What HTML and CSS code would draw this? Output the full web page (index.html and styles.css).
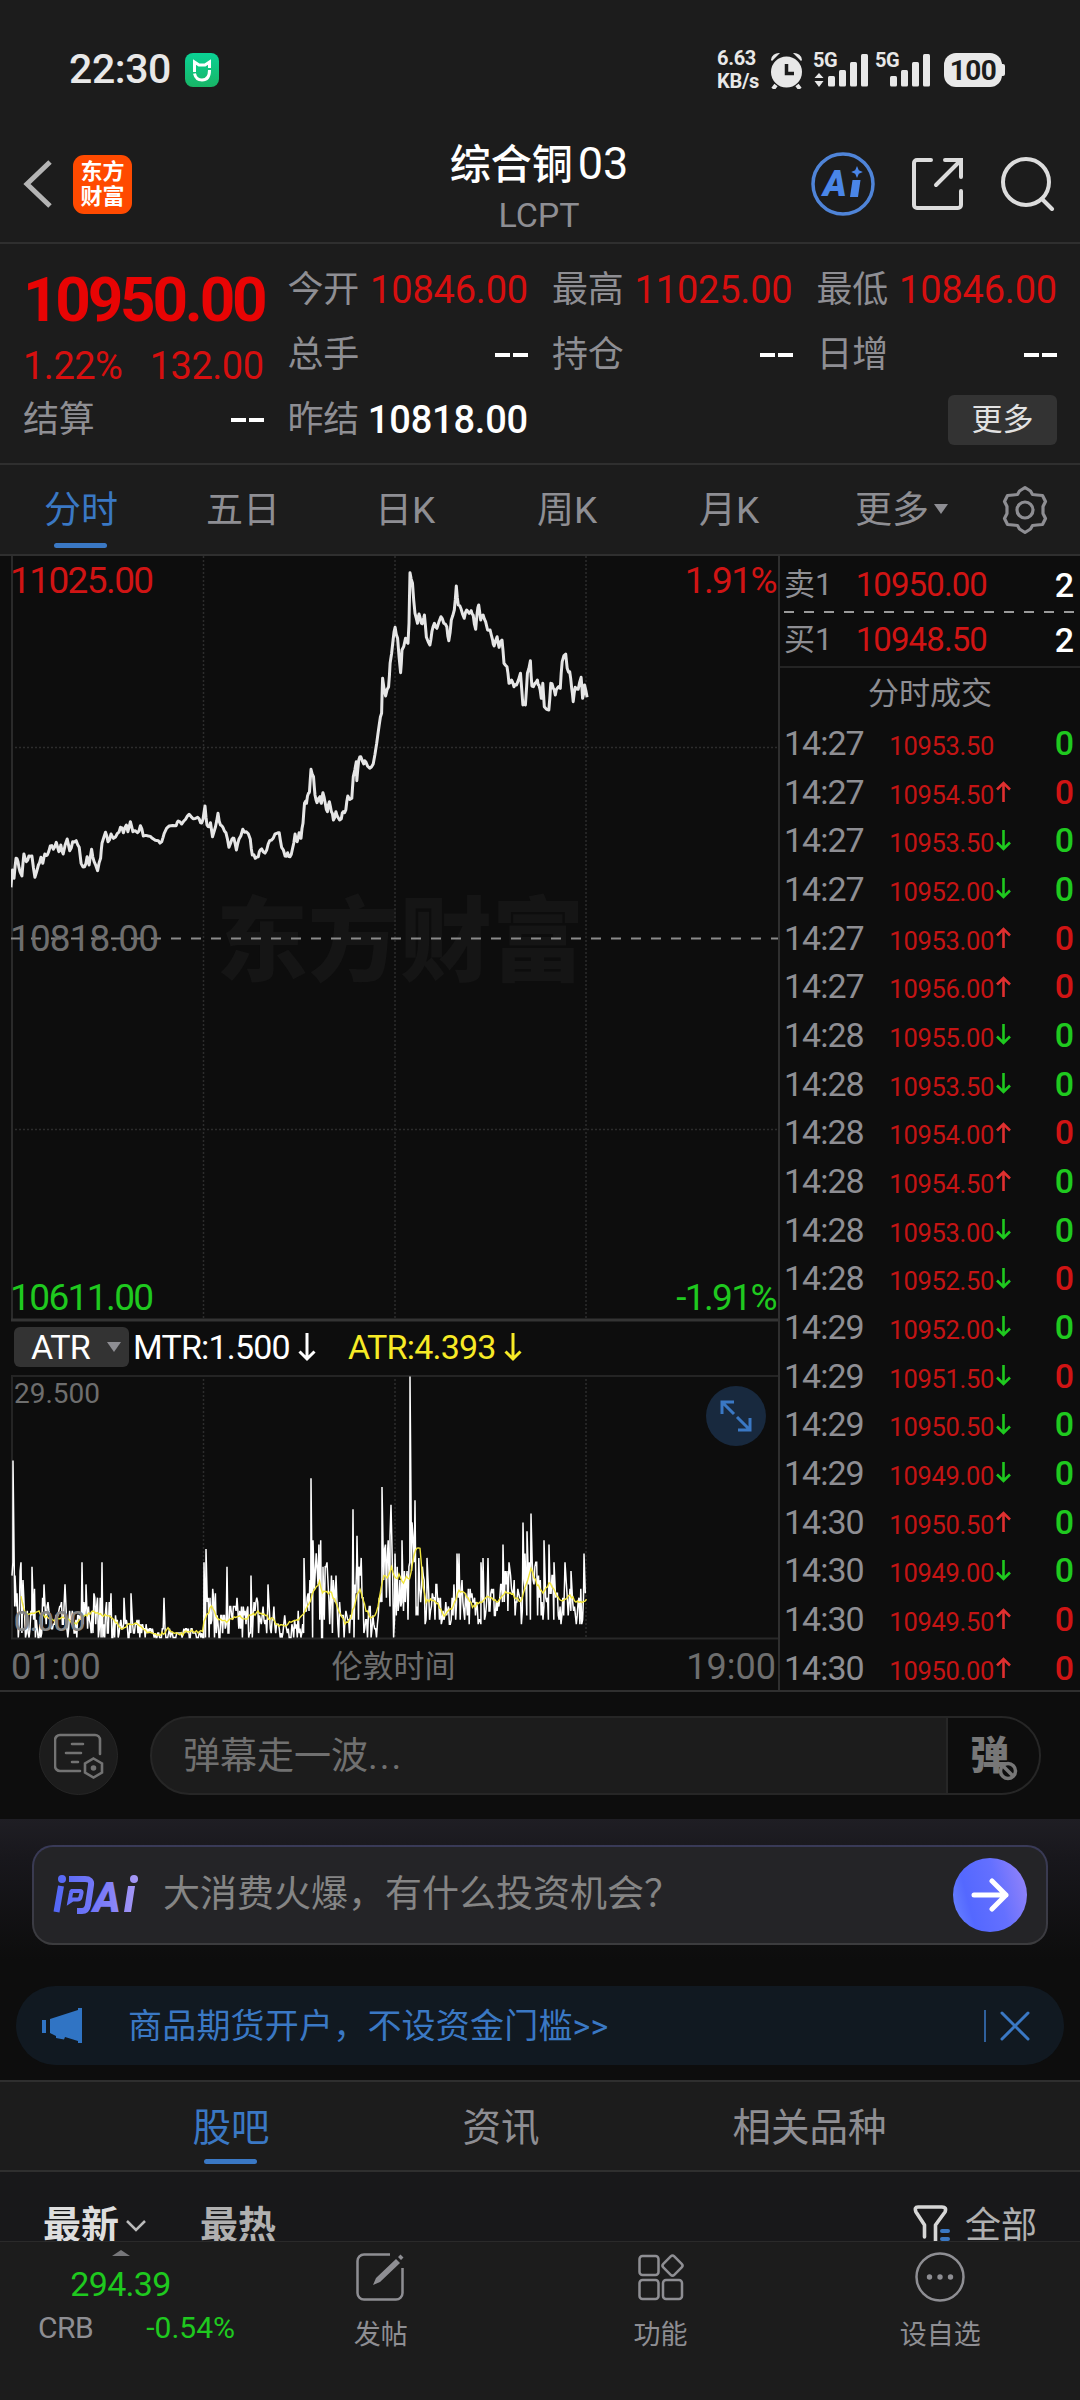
FILE: index.html
```
<!DOCTYPE html>
<html lang="zh-CN">
<head>
  <meta charset="UTF-8">
  <meta name="viewport" content="width=device-width, initial-scale=1.0">
  <title>综合铜03</title>
  <link rel="stylesheet" href="styles.css">
</head>
<body>
  <div class="status-bar">
    <span class="clock">22:30</span>
    <svg class="mi-icon" width="34" height="34" viewBox="0 0 34 34">
      <defs><linearGradient id="mi" x1="0" y1="0" x2="0" y2="1"><stop offset="0" stop-color="#0ad295"/><stop offset="1" stop-color="#18b566"/></linearGradient></defs>
      <rect width="34" height="34" rx="8" fill="url(#mi)"/>
      <path d="M9.500 19V9l4.500 3h6l4.500-3v6M9.500 20.500c1 4.500 4 6.500 7.500 6.500 5 0 7.500-4 7.500-10" fill="none" stroke="#fff" stroke-width="3"/>
    </svg>
    <div class="net-speed"><span>6.63</span><span>KB/s</span></div>
    <svg class="alarm" width="34" height="38" viewBox="0 0 34 38">
      <g fill="#e8e8e8">
        <path d="M1 9a8 7 0 0 1 9-7L2 10zM32 9a8 7 0 0 0-9-7l8 8z"/>
        <circle cx="16.500" cy="21" r="15.500"/>
      </g>
      <path d="M6 34l-3 4M27 34l3 4" stroke="#e8e8e8" stroke-width="4"/>
      <path d="M16.500 13v9.500H24" fill="none" stroke="#1c1c1c" stroke-width="3.500"/>
    </svg>
    <div class="signal">
      <b>5G</b>
      <svg width="54" height="34" viewBox="0 0 54 34" fill="#e8e8e8">
        <path d="M0.500 25l4.500-5 4.500 5zM0.500 28l4.500 6 4.500-6z"/>
        <rect x="14" y="23" width="7" height="10.500" rx="1.500"/><rect x="25" y="17" width="7" height="16.500" rx="1.500"/>
        <rect x="36" y="9" width="7" height="24.500" rx="1.500"/><rect x="47" y="1" width="7" height="32.500" rx="1.500"/>
      </svg>
    </div>
    <div class="signal">
      <b>5G</b>
      <svg width="54" height="34" viewBox="0 0 54 34" fill="#e8e8e8">
        <rect x="14" y="23" width="7" height="10.500" rx="1.500"/><rect x="25" y="17" width="7" height="16.500" rx="1.500"/>
        <rect x="36" y="9" width="7" height="24.500" rx="1.500"/><rect x="47" y="1" width="7" height="32.500" rx="1.500"/>
      </svg>
    </div>
    <div class="battery">100</div>
  </div>

  <header class="header">
    <div class="header-left">
      <svg width="30" height="50" viewBox="0 0 30 50"><path d="M27 3L4 25l23 22" fill="none" stroke="#b4b4b4" stroke-width="5"/></svg>
      <div class="brand"><span>东方</span><span>财富</span></div>
    </div>
    <div class="title">
      <h1>综合铜<span>03</span></h1>
      <p>LCPT</p>
    </div>
    <div class="header-right">
      <div class="ai-btn">
        <svg width="64" height="64" viewBox="0 0 64 64">
          <circle cx="32" cy="32" r="30" fill="none" stroke="#4f84d8" stroke-width="3.500"/>
          <text x="12" y="44" class="ai-text">A</text>
          <path d="M41.500 28h8l-2.500 17h-8z" fill="#4a86e8"/>
          <path d="M46 14l1.800 4.200 4 1.800-4 1.800L46 26l-1.800-4.200-4-1.800 4-1.800z" fill="#4a86e8"/>
        </svg>
      </div>
      <svg width="52" height="54" viewBox="0 0 52 54" fill="none" stroke="#dcdcdc" stroke-width="4" stroke-linecap="round">
        <path d="M19 3H5a3 3 0 0 0-3 3v42a3 3 0 0 0 3 3h41a3 3 0 0 0 3-3V34M33 3h16v17M48 4L24 28"/>
      </svg>
      <svg width="54" height="54" viewBox="0 0 54 54" fill="none" stroke="#dcdcdc" stroke-width="4" stroke-linecap="round">
        <circle cx="25" cy="25" r="23"/><path d="M41 42l10 10"/>
      </svg>
    </div>
  </header>

  <section class="quote">
    <div class="cell last-price up">10950.00</div>
    <div class="cell"><label>今开</label><span class="up">10846.00</span></div>
    <div class="cell"><label>最高</label><span class="up">11025.00</span></div>
    <div class="cell"><label>最低</label><span class="up">10846.00</span></div>
    <div class="cell change up"><span>1.22%</span><span>132.00</span></div>
    <div class="cell"><label>总手</label><i class="dashes"></i></div>
    <div class="cell"><label>持仓</label><i class="dashes"></i></div>
    <div class="cell"><label>日增</label><i class="dashes"></i></div>
    <div class="cell"><label>结算</label><i class="dashes"></i></div>
    <div class="cell"><label>昨结</label><span class="prev">10818.00</span></div>
    <div class="cell"></div>
    <div class="cell more"><button>更多</button></div>
  </section>

  <nav class="period-tabs">
    <span class="active">分时</span>
    <span>五日</span>
    <span>日K</span>
    <span>周K</span>
    <span>月K</span>
    <span class="more-tab">更多<i class="caret"></i></span>
    <svg width="46" height="50" viewBox="0 0 46 50" fill="none" stroke="#8e8e93" stroke-width="3.200" stroke-linejoin="round">
      <path d="M17.500 6l5.500-3.500L28.500 6l2 3.500 4.500.500 5.500.5 3 6-2.500 5v7l2.500 5-3 6-5.500.5-4.500.5-2 3.500-5.500 3.500-5.500-3.500-2-3.500-4.500-.5-5.500-.5-3-6L5 28.500v-7l-2.500-5 3-6 5.500-.5 4.500-.5z"/>
      <circle cx="23" cy="25" r="8"/>
    </svg>
  </nav>

  <main class="market">
    <div class="charts">
      <svg class="price-chart" width="768" height="766" viewBox="0 0 768 766">
        <text x="205" y="418" class="watermark">东方财富</text>
        <g class="grid">
          <path d="M192.500 0v764M384 0v764M575 0v764M0 191.500h767M0 573.500h767"/>
        </g>
        <path d="M1 0v764" stroke="#2a2a2a" stroke-width="2"/>
        <path d="M0 764h767" stroke="#343434" stroke-width="3"/>
        <path d="M0 382.500h767" stroke="#8a8a8a" stroke-width="2" stroke-dasharray="10 10"/>
        <polyline id="priceLine" fill="none" stroke="#e6e6e6" stroke-width="3" stroke-linejoin="round"/>
        <text x="-1" y="37" class="axis red">11025.00</text>
        <text x="765" y="37" class="axis red end">1.91%</text>
        <text x="-1" y="395" class="axis gray">10818.00</text>
        <text x="-1" y="754" class="axis green">10611.00</text>
        <text x="765" y="754" class="axis green end">-1.91%</text>
      </svg>

      <div class="indicator-bar">
        <div class="indicator-select">ATR<i class="caret"></i></div>
        <span class="mtr">MTR:1.500<svg width="18" height="30" viewBox="0 0 18 30"><path d="M9 1v26M1.500 19.500L9 27l7.500-7.500"/></svg></span>
        <span class="atr">ATR:4.393<svg width="18" height="30" viewBox="0 0 18 30"><path d="M9 1v26M1.500 19.500L9 27l7.500-7.500"/></svg></span>
      </div>

      <div class="atr-wrap">
        <svg class="atr-chart" width="768" height="265" viewBox="0 0 768 265">
          <g class="grid"><path d="M192.500 0v264M384 0v264M575 0v264"/></g>
          <path d="M1 0v264M0 1h767" fill="none" stroke="#242424" stroke-width="2"/>
          <path d="M0 263.500h767" stroke="#282828" stroke-width="2"/>
          <polyline id="mtrLine" fill="none" stroke="#fff" stroke-width="1.500"/>
          <polyline id="atrLine" fill="none" stroke="#f2e63c" stroke-width="1.400"/>
          <text x="3" y="28" class="axis-sm">29.500</text>
          <text x="3" y="256" class="axis-sm zero">0.000</text>
        </svg>
        <div class="expand">
          <svg width="32" height="32" viewBox="0 0 32 32" fill="none" stroke="#3a78c4" stroke-width="3"><path d="M2 14V2h12M2 2l12 12M30 18v12H18M30 30L17 17"/></svg>
        </div>
      </div>

      <div class="time-axis"><span>01:00</span><span class="zone">伦敦时间</span><span>19:00</span></div>
    </div>

    <aside class="trades">
      <div class="level"><label>卖1</label><span class="price">10950.00</span><span class="qty">2</span></div>
      <svg class="level-split" width="290" height="2" viewBox="0 0 290 2"><path d="M0 1h290" stroke="#9a9a9a" stroke-width="2" stroke-dasharray="10 10"/></svg>
      <div class="level"><label>买1</label><span class="price">10948.50</span><span class="qty">2</span></div>
      <div class="trades-title">分时成交</div>
      <div class="trade-list" id="tradeList"></div>
    </aside>
  </main>

  <section class="danmu">
    <div class="danmu-set">
      <svg width="50" height="46" viewBox="0 0 50 46" fill="none" stroke="#737373" stroke-width="2.600" stroke-linecap="round">
        <path d="M26 38H6a5 5 0 0 1-5-5V7a5 5 0 0 1 5-5h35a5 5 0 0 1 5 5v14M18 11h11M12 20h15M18 29h6"/>
        <path d="M39.500 25.500l8.500 5v9l-8.500 5-8.500-5v-9z"/><circle cx="39.500" cy="35" r="1.500" fill="#737373"/>
      </svg>
    </div>
    <div class="danmu-input">
      <span>弹幕走一波<i>...</i></span>
      <div class="danmu-toggle">
        <b>弹</b>
        <svg width="22" height="22" viewBox="0 0 22 22" fill="#0d0d0d" stroke="#777" stroke-width="3.500"><circle cx="11" cy="11" r="7.500"/><path d="M6 6l10 10"/></svg>
      </div>
    </div>
  </section>

  <section class="ask">
    <div class="ask-box">
      <svg class="ask-logo" width="86" height="42" viewBox="0 0 86 42">
        <defs><linearGradient id="ask" x1="0" y1="0" x2="86" y2="0" gradientUnits="userSpaceOnUse"><stop offset="0" stop-color="#5166f6"/><stop offset="0.600" stop-color="#7d7cf8"/><stop offset="1" stop-color="#a99af5"/></linearGradient></defs>
        <g fill="none" stroke="url(#ask)" stroke-width="6">
          <path d="M8 12L3.500 38M16 5h16q7 0 6 6l-3 20q-1 6-6 6h-5"/>
          <path d="M18 17h9q2 0 1.500 2l-1 4q-.5 2.500-3 2.500h-5l-3 2 1.500-8.500q.2-2 1-2z" stroke-width="4"/>
        </g>
        <circle cx="9" cy="5" r="4" fill="url(#ask)"/><circle cx="81" cy="5" r="4" fill="url(#ask)"/>
        <text x="40" y="38" class="ask-a" fill="url(#ask)">A</text>
        <path d="M75 12h7l-4 26h-7z" fill="url(#ask)"/>
      </svg>
      <span>大消费火爆，有什么投资机会？</span>
      <div class="ask-go">
        <svg width="38" height="34" viewBox="0 0 38 34" fill="none" stroke="#fff" stroke-width="5" stroke-linecap="round" stroke-linejoin="round"><path d="M3 17h32M21 3l14 14-14 14"/></svg>
      </div>
    </div>
  </section>

  <div class="notice">
    <svg width="40" height="36" viewBox="0 0 40 36" fill="#3074c4"><path d="M0 12h4v13H0zM8 11l28-9V0h4v35h-4v-2l-13-4-1 2.500-8-1.500v-2l-6-3z"/></svg>
    <span>商品期货开户，不设资金门槛&gt;&gt;</span>
    <i></i>
    <svg width="30" height="30" viewBox="0 0 30 30" stroke="#3a78c4" stroke-width="3" stroke-linecap="round"><path d="M2 2l26 26M28 2L2 28"/></svg>
  </div>

  <nav class="info-tabs">
    <span class="active">股吧</span>
    <span>资讯</span>
    <span class="wide">相关品种</span>
  </nav>

  <section class="posts">
    <b>最新</b>
    <svg class="chev" width="20" height="14" viewBox="0 0 20 14" fill="none" stroke="#bbb" stroke-width="2.500"><path d="M1 2l9 9 9-9"/></svg>
    <b class="hot">最热</b>
    <svg class="funnel" width="38" height="42" viewBox="0 0 38 42" fill="none" stroke="#d6d6d6" stroke-width="3.600" stroke-linecap="round" stroke-linejoin="round">
      <path d="M11.500 33V21L3 8Q1 3 5 3h24q5 0 3 5l-9.500 13v20"/>
      <path d="M29 27h6M29 35h6" stroke="#3a78c4" stroke-width="4"/>
    </svg>
    <span>全部</span>
  </section>

  <footer class="bottom-bar">
    <div class="index">
      <i class="arrow-up"></i>
      <div class="index-value">294.39</div>
      <div class="index-row"><label>CRB</label><span>-0.54%</span></div>
    </div>
    <div class="action">
      <svg width="50" height="50" viewBox="0 0 50 50" fill="none" stroke="#8e8e93" stroke-width="2.500">
        <path d="M34 2.500H8A6.500 6.500 0 0 0 1.500 9v32A6.500 6.500 0 0 0 8 47.500h32a6.500 6.500 0 0 0 6.500-6.500V16"/>
        <path d="M17 33l3-7 20-19 4 4-20 19zM42 5l2.500-2.500 3 3L45 8z" fill="#8e8e93" stroke="none"/>
      </svg>
      <span>发帖</span>
    </div>
    <div class="action">
      <svg width="50" height="50" viewBox="0 0 50 50" fill="none" stroke="#8e8e93" stroke-width="2.500">
        <rect x="3.500" y="4" width="19" height="19" rx="3"/><rect x="3.500" y="28" width="19" height="19" rx="3"/><rect x="27" y="28" width="19" height="19" rx="3"/>
        <rect x="28.800" y="5.800" width="15.500" height="15.500" rx="2.500" transform="rotate(45 36.500 13.500)"/>
      </svg>
      <span>功能</span>
    </div>
    <div class="action">
      <svg width="50" height="50" viewBox="0 0 50 50" fill="none" stroke="#8e8e93" stroke-width="2.500">
        <circle cx="25" cy="25" r="23.500"/>
        <g fill="#8e8e93" stroke="none"><circle cx="14.500" cy="25" r="2.700"/><circle cx="25" cy="25" r="2.700"/><circle cx="35.500" cy="25" r="2.700"/></g>
      </svg>
      <span>设自选</span>
    </div>
  </footer>

  <script src="script.js"></script>
</body>
</html>
```
FILE: styles.css
```
* {
  box-sizing: border-box;
}
body {
  margin: 0;
  width: 1080px;
  height: 2400px;
  overflow: hidden;
  display: flex;
  flex-direction: column;
  background: #0d0d0d;
  color: #8e8e93;
  font-family: Roboto, "Noto Sans CJK SC", sans-serif;
  line-height: 1;
}
svg {
  display: block;
  flex: none;
}
i {
  font-style: normal;
}
h1, p {
  margin: 0;
}
.up {
  color: #d60f0f;
}

/* status bar */
.status-bar {
  height: 115px;
  padding: 24px 78px 0 69px;
  background: #1c1c1c;
  color: #e8e8e8;
  display: flex;
  align-items: center;
  flex: none;
}
.clock {
  font-size: 41px;
  font-weight: 500;
  letter-spacing: -0.4px;
}
.mi-icon {
  margin-left: 14px;
}
.net-speed {
  margin-left: auto;
  width: 44px;
  display: flex;
  flex-direction: column;
  font-size: 20px;
  font-weight: 700;
  line-height: 23px;
  letter-spacing: -0.3px;
}
.alarm {
  margin-left: 9px;
}
.signal {
  position: relative;
  margin-left: 10px;
}
.signal + .signal {
  margin-left: 8px;
}
.signal b {
  position: absolute;
  left: -1px;
  top: -3px;
  font-size: 20px;
  letter-spacing: -0.5px;
}
.battery {
  position: relative;
  margin: 0 0 0 14px;
  width: 58px;
  height: 34px;
  border-radius: 12px;
  background: #e8e8e8;
  color: #1c1c1c;
  font-size: 28px;
  font-weight: 700;
  line-height: 35px;
  text-align: center;
  letter-spacing: -0.5px;
}
.battery::after {
  content: "";
  position: absolute;
  right: -3px;
  top: 11px;
  width: 5px;
  height: 12px;
  border-radius: 2px;
  background: #e8e8e8;
}

/* header */
.header {
  height: 129px;
  padding: 11px 25px 0 23px;
  background: #1c1c1c;
  border-bottom: 2px solid #2f2f2f;
  display: grid;
  grid-template-columns: 1fr auto 1fr;
  align-items: center;
  flex: none;
}
.header-left, .header-right {
  display: flex;
  align-items: center;
}
.header-left {
  gap: 20px;
}
.header-right {
  justify-content: flex-end;
  gap: 37px;
}
.brand {
  width: 59px;
  height: 59px;
  border-radius: 11px;
  background: #ff4a00;
  color: #fff;
  font-size: 22px;
  font-weight: 700;
  line-height: 25px;
  padding-top: 4px;
  display: flex;
  flex-direction: column;
  align-items: center;
}
.ai-text {
  font-size: 36px;
  font-weight: 900;
  font-style: italic;
  fill: #4a86e8;
}
.title {
  padding-top: 11px;
  text-align: center;
}
.title h1 {
  color: #fff;
  font-size: 41px;
  font-weight: 500;
  line-height: 50px;
}
.title h1 span {
  margin-left: 5px;
  font-size: 45px;
  font-weight: 400;
}
.title p {
  font-size: 34px;
  line-height: 50px;
}

/* quote */
.quote {
  height: 221px;
  padding: 13px 23px 0;
  background: #1c1c1c;
  border-bottom: 2px solid #2f2f2f;
  display: grid;
  grid-template-columns: repeat(4, minmax(0, 1fr));
  grid-template-rows: 65px 65px 65px;
  column-gap: 24px;
  flex: none;
}
.cell {
  display: flex;
  align-items: center;
  justify-content: space-between;
  font-size: 38px;
  letter-spacing: -0.2px;
  white-space: nowrap;
}
.cell label {
  font-size: 36px;
}
.cell .prev {
  color: #fff;
  font-weight: 500;
  letter-spacing: -0.2px;
}
.last-price {
  padding-top: 20px;
  font-size: 62px;
  font-weight: 700;
  letter-spacing: -3.2px;
  color: #e80404;
}
.change {
  padding-top: 22px;
  letter-spacing: -0.5px;
}
.dashes {
  width: 33px;
  height: 4px;
  background: linear-gradient(90deg, #fff 15px, transparent 15px, transparent 18px, #fff 18px);
}
.more {
  justify-content: flex-end;
}
.more button {
  width: 109px;
  height: 50px;
  border: 0;
  border-radius: 6px;
  background: #333;
  color: #e2e2e2;
  font: 31px/50px Roboto, "Noto Sans CJK SC", sans-serif;
  padding: 0;
}

/* period tabs */
.period-tabs {
  height: 91px;
  background: #1c1c1c;
  border-bottom: 2px solid #2f2f2f;
  display: flex;
  align-items: center;
  flex: none;
}
.period-tabs span {
  width: 162px;
  height: 89px;
  line-height: 92px;
  font-size: 37px;
  text-align: center;
}
.active {
  position: relative;
  color: #3a78c4;
}
.active::after {
  content: "";
  position: absolute;
  left: 50%;
  bottom: 6px;
  width: 53px;
  height: 5px;
  margin-left: -27px;
  border-radius: 3px;
  background: #3a78c4;
}
.period-tabs .more-tab {
  width: 138px;
  text-align: right;
}
.caret {
  display: inline-block;
  border: 7px solid transparent;
  border-top: 10px solid #8e8e93;
  border-bottom: 0;
}
.more-tab .caret {
  margin-left: 5px;
  vertical-align: 9px;
}
.period-tabs svg {
  margin-left: 54px;
}

/* market */
.market {
  height: 1136px;
  border-bottom: 2px solid #2f2f2f;
  display: flex;
  flex: none;
}
.charts {
  width: 780px;
  padding-left: 11px;
  border-right: 2px solid #2f2f2f;
}
.grid path {
  fill: none;
  stroke: #2c2c2c;
  stroke-width: 1.5;
  stroke-dasharray: 2 2;
}
.watermark {
  font-family: "Noto Sans CJK SC", sans-serif;
  font-size: 92px;
  font-weight: 900;
  fill: #151515;
}
.axis {
  font-size: 37px;
  letter-spacing: -1.6px;
}
.axis-sm {
  font-size: 28px;
  fill: #6e6e6e;
}
.axis-sm.zero {
  fill: #858585;
  font-weight: 500;
}
.end {
  text-anchor: end;
}
.red {
  fill: #d01414;
}
.green {
  fill: #1fc91f;
}
.gray {
  fill: #6e6e6e;
  letter-spacing: -0.9px;
}
.indicator-bar {
  height: 53px;
  padding: 5px 0 8px 3px;
  display: flex;
  align-items: center;
  font-size: 34px;
  letter-spacing: -0.8px;
}
.indicator-select {
  width: 115px;
  height: 40px;
  padding: 0 8px 0 17px;
  border-radius: 6px;
  background: #333;
  color: #fff;
  display: flex;
  align-items: center;
  justify-content: space-between;
}
.mtr, .atr {
  display: flex;
  align-items: center;
}
.mtr svg, .atr svg {
  margin-left: 8px;
  fill: none;
  stroke: currentColor;
  stroke-width: 3;
}
.mtr {
  margin-left: 4px;
  color: #fff;
}
.atr {
  margin-left: 32px;
  color: #f7ea26;
}
.atr-wrap {
  position: relative;
}
.expand {
  position: absolute;
  left: 695px;
  top: 11px;
  width: 60px;
  height: 60px;
  border-radius: 50%;
  background: #18293e;
  display: flex;
  align-items: center;
  justify-content: center;
}
.time-axis {
  height: 53px;
  padding-right: 2px;
  display: flex;
  justify-content: space-between;
  align-items: center;
  font-size: 36px;
  color: #6e6e6e;
}
.time-axis .zone {
  font-size: 31px;
}

/* trades */
.trades {
  flex: 1;
  padding: 2px 6px 0 4px;
}
.level {
  height: 53px;
  display: flex;
  align-items: center;
  font-size: 33px;
}
.level label {
  width: 60px;
  font-size: 31px;
}
.level .price {
  width: 143px;
  text-align: right;
  color: #d01414;
  letter-spacing: -0.9px;
}
.level .qty {
  margin-left: auto;
  color: #fff;
  font-size: 34px;
  font-weight: 500;
}
.trades-title {
  height: 53px;
  margin: 0 -6px 0 -4px;
  border-top: 2px solid #242424;
  font-size: 31px;
  line-height: 51px;
  text-align: center;
}
.trade-list {
  display: flex;
  flex-direction: column;
}
.trade {
  height: 48.68px;
  display: flex;
  align-items: baseline;
  line-height: 48px;
}
.trade time {
  width: 84px;
  font-size: 34px;
  letter-spacing: -1px;
}
.trade .price {
  width: 126px;
  font-size: 25.5px;
  text-align: right;
  color: #c41414;
  letter-spacing: -0.3px;
}
.trade svg {
  margin-left: 2px;
  fill: none;
  stroke-width: 2.6;
  align-self: center;
}
.trade .vol {
  margin-left: auto;
  font-size: 34px;
  font-weight: 500;
}
.vol.buy {
  color: #d01414;
}
.vol.sell {
  color: #1fc91f;
}

/* danmu */
.danmu {
  height: 127px;
  padding: 24px 39px;
  display: flex;
  gap: 32px;
  flex: none;
}
.danmu-set {
  width: 79px;
  height: 79px;
  border: 1px solid #262626;
  border-radius: 50%;
  background: #1c1c1c;
  display: flex;
  align-items: center;
  justify-content: center;
  padding-top: 1px;
}
.danmu-input {
  flex: 1;
  height: 79px;
  border: 2px solid #262626;
  border-radius: 40px;
  overflow: hidden;
  background: #1c1c1c;
  color: #707070;
  display: flex;
  justify-content: space-between;
  padding-left: 31px;
  font-size: 37px;
  line-height: 77px;
}
.danmu-input i {
  letter-spacing: 2px;
}
.danmu-toggle {
  position: relative;
  width: 93px;
  border-left: 2px solid #262626;
  background: #0d0d0d;
  color: #777;
}
.danmu-toggle b {
  margin-left: 22px;
  font-size: 39px;
  font-weight: 900;
}
.danmu-toggle svg {
  position: absolute;
  left: 49px;
  top: 42px;
}

/* ask ai */
.ask {
  height: 167px;
  padding: 26px 32px;
  background: linear-gradient(#1f1e24, #18171c 40px, #0d0d0d 140px);
  flex: none;
}
.ask-box {
  height: 100px;
  border: 2px solid transparent;
  border-radius: 21px;
  background: linear-gradient(#242427, #242427) padding-box, linear-gradient(#393a58, #3c3c3e) border-box;
  display: flex;
  align-items: center;
  padding: 0 19px;
  font-size: 37px;
  line-height: 50px;
  color: #858585;
}
.ask-box span {
  margin-left: 24px;
}
.ask-logo {
  overflow: visible;
}
.ask-a {
  font-size: 42px;
  font-weight: 900;
  font-style: italic;
}
.ask-go {
  margin-left: auto;
  width: 74px;
  height: 74px;
  border-radius: 50%;
  background: linear-gradient(75deg, #6b86ff, #5468ff 25%, #6470ff 60%, #9a86f8);
  display: flex;
  align-items: center;
  justify-content: center;
}

/* notice */
.notice {
  height: 79px;
  margin: 0 16px 15px;
  padding: 0 34px 0 26px;
  border-radius: 40px;
  background: #111921;
  color: #3a78c4;
  display: flex;
  align-items: center;
  font-size: 34px;
  line-height: 50px;
  letter-spacing: 0.2px;
  flex: none;
}
.notice span {
  margin-left: 46px;
}
.notice i {
  margin-left: auto;
  margin-right: 14px;
  width: 2px;
  height: 32px;
  background: #2f609c;
}

/* info tabs */
.info-tabs {
  height: 92px;
  border-top: 2px solid #2f2f2f;
  border-bottom: 2px solid #2f2f2f;
  background: #1c1c1c;
  display: flex;
  padding-left: 96px;
  font-size: 38.5px;
  line-height: 91px;
  text-align: center;
  flex: none;
}
.info-tabs span {
  width: 270px;
}
.info-tabs .wide {
  width: 347px;
}
.posts {
  height: 69px;
  padding: 32px 43px 0;
  background: #18181a;
  display: flex;
  align-items: flex-start;
  overflow: hidden;
  font-size: 38px;
  line-height: 42px;
  color: #dedede;
  flex: none;
}
.posts .chev {
  margin: 15px 0 0 7px;
}
.posts .hot {
  margin-left: 54px;
  color: #b0b0b0;
}
.posts .funnel {
  margin-left: auto;
}
.posts span {
  margin-left: 14px;
  font-size: 36px;
  line-height: 44px;
  color: #b0b0b0;
}

/* bottom bar */
.bottom-bar {
  height: 159px;
  border-top: 1px solid #2a2a2a;
  background: #1c1c1c;
  display: flex;
  flex: none;
}
.index {
  width: 241px;
  padding-top: 8px;
  display: flex;
  flex-direction: column;
  align-items: center;
}
.arrow-up {
  border: 9px solid transparent;
  border-bottom: 6px solid #77777a;
  border-top: 0;
}
.index-value {
  margin-top: 10px;
  font-size: 34px;
  line-height: 36px;
  letter-spacing: -0.7px;
  color: #1fc91f;
}
.index-row {
  width: 100%;
  margin-top: 9px;
  padding: 0 6px 0 38px;
  display: flex;
  justify-content: space-between;
  font-size: 30px;
  line-height: 34px;
}
.index-row label {
  letter-spacing: -0.5px;
}
.index-row span {
  color: #1fc91f;
}
.action {
  flex: 1;
  padding-top: 10px;
  display: flex;
  flex-direction: column;
  align-items: center;
  gap: 18px;
  font-size: 27px;
  line-height: 30px;
}
```
FILE: script.js
```
const trades = [
  ["14:27", "10953.50", "", "sell"],
  ["14:27", "10954.50", "up", "buy"],
  ["14:27", "10953.50", "down", "sell"],
  ["14:27", "10952.00", "down", "sell"],
  ["14:27", "10953.00", "up", "buy"],
  ["14:27", "10956.00", "up", "buy"],
  ["14:28", "10955.00", "down", "sell"],
  ["14:28", "10953.50", "down", "sell"],
  ["14:28", "10954.00", "up", "buy"],
  ["14:28", "10954.50", "up", "sell"],
  ["14:28", "10953.00", "down", "sell"],
  ["14:28", "10952.50", "down", "buy"],
  ["14:29", "10952.00", "down", "sell"],
  ["14:29", "10951.50", "down", "buy"],
  ["14:29", "10950.50", "down", "sell"],
  ["14:29", "10949.00", "down", "sell"],
  ["14:30", "10950.50", "up", "sell"],
  ["14:30", "10949.00", "down", "sell"],
  ["14:30", "10949.50", "up", "buy"],
  ["14:30", "10950.00", "up", "buy"]
];

const arrows = {
  up: '<svg width="15" height="22" viewBox="0 0 15 22" stroke="#e03030"><path d="M7.500 21V2M1 8.500L7.500 2 14 8.500"/></svg>',
  down: '<svg width="15" height="22" viewBox="0 0 15 22" stroke="#1fc91f"><path d="M7.500 0v19M1 12.500L7.500 19l6.500-6.500"/></svg>'
};

document.getElementById("tradeList").innerHTML = trades.map(t => `
  <div class="trade">
    <time>${t[0]}</time><span class="price">${t[1]}</span>${arrows[t[2]] || ""}<span class="vol ${t[3]}">0</span>
  </div>`).join("");

// fixed seed so the lines are the same on every load
let seed = 7;
function rand() {
  seed = (seed * 16807) % 2147483647;
  return seed / 2147483647;
}

function interpolate(points, x) {
  for (let i = 1; i < points.length; i++) {
    if (x <= points[i][0]) {
      const [x0, y0] = points[i - 1];
      const [x1, y1] = points[i];
      return y0 + (y1 - y0) * (x - x0) / (x1 - x0);
    }
  }
  return points[points.length - 1][1];
}

// price line: x in half pixels, y in thirds of a pixel
const price = [
  [22,1312],[25,1260],[28,1285],[32,1225],[36,1235],[40,1265],[44,1278],[48,1212],[53,1235],[58,1218],[64,1218],[70,1282],[77,1245],[82,1222],[86,1240],[90,1212],[95,1215],[101,1188],[107,1198],[113,1177],[118,1205],[122,1185],[127,1212],[135,1167],[140,1202],[146,1175],[153,1172],[159,1192],[163,1240],[170,1250],[175,1220],[179,1245],[184,1198],[189,1235],[196,1262],[202,1225],[205,1180],[212,1147],[217,1175],[223,1152],[228,1165],[236,1150],[242,1132],[248,1148],[254,1125],[257,1145],[262,1115],[267,1145],[276,1148],[282,1127],[288,1158],[298,1158],[306,1165],[318,1172],[325,1175],[330,1150],[340,1128],[354,1127],[358,1113],[365,1122],[373,1108],[380,1093],[388,1106],[397,1102],[403,1118],[408,1108],[412,1068],[416,1125],[420,1130],[423,1118],[427,1160],[433,1130],[438,1090],[443,1125],[448,1132],[454,1148],[460,1192],[466,1168],[470,1165],[475,1200],[480,1168],[488,1138],[495,1145],[503,1168],[507,1215],[513,1225],[519,1220],[523,1200],[529,1205],[536,1200],[542,1172],[549,1165],[556,1150],[561,1148],[566,1192],[573,1218],[578,1208],[583,1220],[588,1195],[593,1152],[597,1175],[601,1148],[605,1165],[609,1120],[612,1060],[616,1060],[620,1030],[622,1025],[625,958],[630,980],[633,1035],[637,1058],[643,1040],[646,1060],[649,1028],[654,1062],[658,1085],[662,1055],[666,1085],[670,1110],[675,1085],[679,1102],[686,1106],[690,1085],[695,1080],[699,1038],[707,1045],[710,980],[716,935],[717,992],[721,930],[725,920],[731,942],[735,935],[743,955],[750,942],[757,880],[762,825],[767,790],[769,685],[775,738],[781,710],[784,640],[790,570],[794,532],[799,565],[805,668],[808,600],[815,565],[820,580],[822,520],[824,368],[829,400],[834,490],[839,520],[842,492],[847,520],[850,512],[853,495],[857,562],[864,585],[868,545],[873,520],[878,535],[886,500],[892,520],[898,530],[902,572],[907,510],[913,480],[917,408],[921,465],[927,478],[933,505],[938,480],[943,490],[947,482],[951,495],[956,538],[959,488],[962,465],[966,510],[971,495],[976,515],[980,540],[985,540],[990,570],[993,588],[999,560],[1003,592],[1009,570],[1013,640],[1019,650],[1023,700],[1028,690],[1033,710],[1038,705],[1046,670],[1051,765],[1056,765],[1060,670],[1066,632],[1069,708],[1075,700],[1080,690],[1083,705],[1088,745],[1091,700],[1094,770],[1103,780],[1107,700],[1112,715],[1116,735],[1120,715],[1126,715],[1130,635],[1137,612],[1140,655],[1145,665],[1149,715],[1152,755],[1156,712],[1162,718],[1168,682],[1171,745],[1175,705],[1180,742]
];

const pricePoints = [];
for (let i = 0; i < price.length; i++) {
  const [x, y] = price[i];
  pricePoints.push(`${((x - 22) / 2.01).toFixed(1)},${((y - 318) / 3).toFixed(1)}`);
  if (i < price.length - 1) {
    const nx = (x + price[i + 1][0]) / 2;
    const ny = (y + price[i + 1][1]) / 2 + (rand() - 0.5) * 14;
    pricePoints.push(`${((nx - 22) / 2.01).toFixed(1)},${((ny - 318) / 3).toFixed(1)}`);
  }
}
document.getElementById("priceLine").setAttribute("points", pricePoints.join(" "));

// smoothed range (x px, value)
const atr = [
  [10,4.6],[13,3],[18,2.7],[25,3],[33,2.5],[40,1.9],[50,2.3],[58,1.9],[65,1.4],[72,2.4],[82,3],[92,2.6],[100,2.2],[110,1.1],[122,1.7],[132,.9],[148,.2],[158,1],[168,.3],[180,.8],[191,.6],[194,2.2],[201,3.6],[206,2.2],[212,1.7],[225,2.4],[235,2.2],[248,2.9],[255,2.4],[262,2],[268,1.3],[275,1.5],[285,1.8],[292,2.5],[298,3.8],[304,5.6],[309,6.3],[311,5.1],[320,5.1],[326,3.7],[334,1.5],[340,2.3],[347,5.2],[350,5.3],[355,3],[361,2.2],[366,2.8],[372,6.8],[378,7],[380,8.2],[384,6.6],[388,7],[392,6],[396,7],[398,6.2],[402,8.6],[405,10],[409,10],[412,6],[415,4],[420,4.3],[426,4],[433,2.6],[440,3.2],[448,5.2],[455,4.8],[462,3.4],[470,4.1],[478,4.6],[486,3.9],[494,5.2],[502,4.8],[510,4],[515,6],[520,7.8],[526,6],[532,5],[538,6.2],[544,5.2],[550,4],[558,4.8],[566,4],[572,3.8],[576,4.5]
];

// single minutes with a large range (x px, value)
const spikes = [
  [2,20],[4,7],[6,5],[12,6.5],[21,8],[33,6],[54,6],[71,8.5],[75,6],[91,8.5],[100,5],[113,4.5],[120,5],[153,4.5],[193,8.5],[195,10],[216,8],[240,7],[257,6],[293,9],[300,18],[302,11],[306,8],[312,8],[315,8],[325,7],[342,14.5],[346,11.5],[348,8],[371,17],[379,11.5],[380,15],[384,9.5],[391,11],[399,29.500],[401,13],[402,11.500],[404,15.5],[416,9],[446,9.500],[448,9.500],[470,8.5],[472,9],[477,9],[492,10.5],[498,8.5],[512,13],[514,9.5],[516,12],[520,14],[533,11],[538,10.500],[543,8.5],[554,8.5],[560,7.5],[573,9.5]
];

function toY(v) {
  return (262.5 - v * 8.85).toFixed(1);
}

const mtrPoints = [];
let next = 0;
for (let x = 1; x <= 575; x += 0.9) {
  if (next < spikes.length && x >= spikes[next][0]) {
    mtrPoints.push(`${spikes[next][0]},${toY(spikes[next][1])}`);
    next++;
    continue;
  }
  const mean = Math.min(interpolate(atr, x), 6);
  // calm hours often touch zero, busy hours rarely do
  const v = x > 384 ? mean * (0.35 + rand() * 1.15) : mean * (rand() * 2.1 - 0.25);
  mtrPoints.push(`${x.toFixed(1)},${toY(Math.max(0, Math.round(v * 2) / 2))}`);
}
document.getElementById("mtrLine").setAttribute("points", mtrPoints.join(" "));

const atrPoints = [];
for (let x = 10; x <= 576; x += 1.5) {
  atrPoints.push(`${x},${toY(interpolate(atr, x) + (rand() - 0.5) * 0.4)}`);
}
document.getElementById("atrLine").setAttribute("points", atrPoints.join(" "));
```
